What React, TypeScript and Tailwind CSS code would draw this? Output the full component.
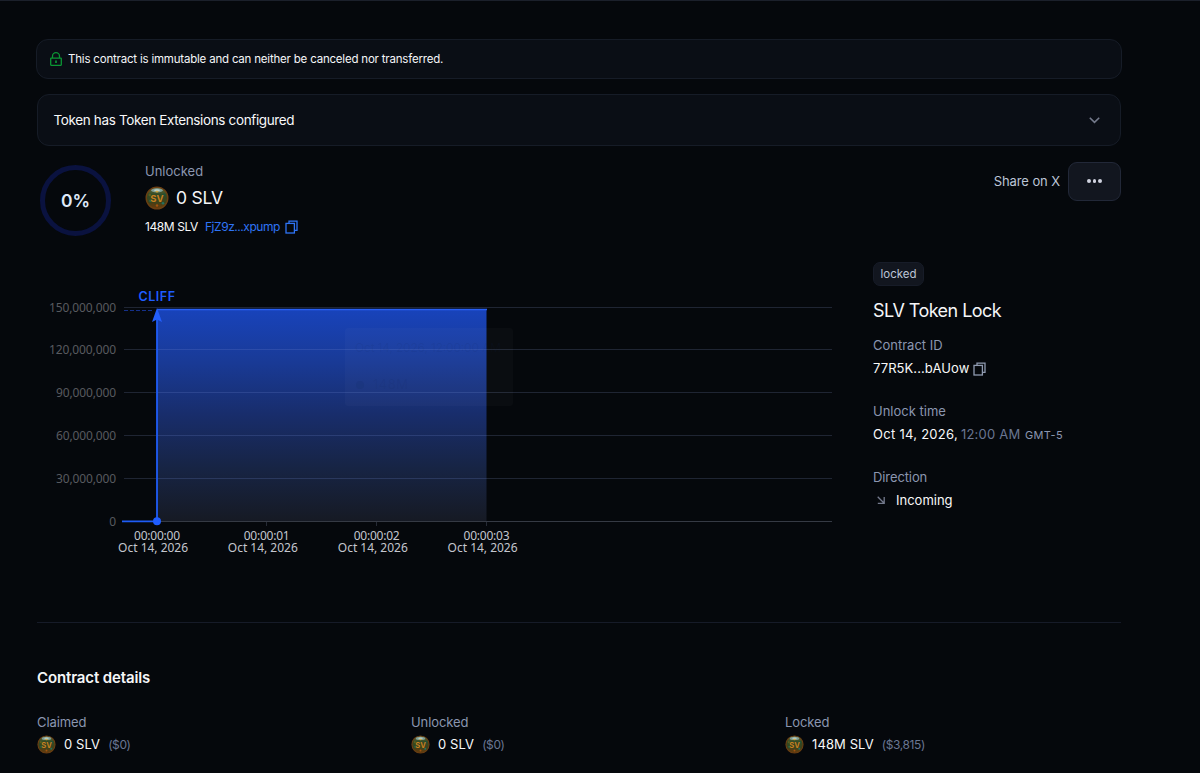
import React from "react";

function CopyIcon({ className }: { className: string }) {
  return (
    <svg className={className} viewBox="0 0 13 14" fill="none" stroke="currentColor" strokeWidth="1.3">
      <path d="M4 3.4V1.2H12V10.4H9.6" />
      <rect x="1" y="3.4" width="8.4" height="9.6" />
    </svg>
  );
}

function Coin({ className, id }: { className: string; id: string }) {
  return (
    <svg className={className} viewBox="0 0 24 24">
      <defs>
        <linearGradient id={id} x1="0" y1="0" x2="0" y2="1">
          <stop offset="0" stopColor="#6d6a35" />
          <stop offset="0.35" stopColor="#2f4a26" />
          <stop offset="0.7" stopColor="#3d421a" />
          <stop offset="1" stopColor="#6b3a0c" />
        </linearGradient>
      </defs>
      <circle cx="12" cy="12" r="10.8" fill={`url(#${id})`} stroke="#6b3f12" strokeWidth="1.4" />
      <ellipse cx="12" cy="4.3" rx="6" ry="2" fill="#7f9f96" />
      <ellipse cx="12" cy="4.2" rx="3" ry="0.9" fill="#bcd0c8" />
      <ellipse cx="12" cy="5.6" rx="1.6" ry="0.9" fill="#d0a840" />
      <circle cx="5.5" cy="14.8" r="1.3" fill="#20645a" />
      <circle cx="18" cy="17.3" r="1.3" fill="#23705f" />
      <circle cx="8" cy="18.5" r="1.3" fill="#5a3a10" />
      <circle cx="12" cy="19.5" r="1.2" fill="#a3520f" />
      <circle cx="4.8" cy="9" r="1.3" fill="#5a5b1e" />
      <circle cx="19" cy="9" r="1.5" fill="#1f5136" />
      <text x="12" y="16" textAnchor="middle" fontSize="9.5" fontWeight="700" fill="#c67f20" fontFamily="Inter, sans-serif">
        SV
      </text>
    </svg>
  );
}

const gridLines = [
  { y: 307.5, label: "150,000,000", w: 67 },
  { y: 349.5, label: "120,000,000", w: 67 },
  { y: 392.5, label: "90,000,000", w: 60 },
  { y: 435.5, label: "60,000,000", w: 60 },
  { y: 478.5, label: "30,000,000", w: 60 },
  { y: 521.5, label: "0", w: 6 },
];
const ticks = [
  { x: 157, label: "00:00:00" },
  { x: 266.7, label: "00:00:01" },
  { x: 376.7, label: "00:00:02" },
  { x: 486.5, label: "00:00:03" },
];

function Chart() {
  return (
    <svg className="block h-[290px] w-[800px] font-['Noto_Sans',sans-serif]" viewBox="37 280 800 290">
      <defs>
        <linearGradient id="area" x1="0" y1="0" x2="0" y2="1">
          <stop offset="0" stopColor="#1843bb" />
          <stop offset="0.25" stopColor="#193a96" />
          <stop offset="0.5" stopColor="#182d6b" />
          <stop offset="0.75" stopColor="#172444" />
          <stop offset="1" stopColor="#161a24" />
        </linearGradient>
      </defs>
      <path d="M124 307.5H832" stroke="#1f2533" />
      <rect x="157" y="309" width="329.5" height="212" fill="url(#area)" />
      {gridLines.map((g) => (
        <g key={g.label}>
          {g.y > 308 && g.y < 520 && (
            <>
              <path d={`M124 ${g.y}H156M487 ${g.y}H832`} stroke="#1f2533" />
              <path d={`M157 ${g.y}H487`} stroke="#7088d0" strokeOpacity="0.22" />
            </>
          )}
          <text x="116" y={g.y + 4.2} textAnchor="end" fontSize="12" textLength={g.w} fill="#585a5f">
            {g.label}
          </text>
        </g>
      ))}
      <path d="M124 521.5H832" stroke="#353a44" />
      <path d="M266.5 522V526M376.5 522V526M486.5 522V526" stroke="#252a35" />
      <rect x="345" y="328" width="168" height="78" rx="3" fill="#ffffff" fillOpacity="0.022" />
      <circle cx="360" cy="385" r="4" fill="#183175" fillOpacity="0.3" />
      <g fill="#10245e" fillOpacity="0.1" fontFamily="Inter, sans-serif">
        <text x="355" y="352" fontSize="12" textLength="146">Oct 14, 2026, 12:00:00 AM</text>
        <text x="373" y="389" fontSize="13" textLength="35">148M</text>
      </g>
      <path d="M124 310.5H154" stroke="#15308a" strokeDasharray="4 2" />
      <path d="M157 309.5H487" stroke="#285ff5" strokeWidth="1.6" />
      <path d="M122 521.3H157V312" fill="none" stroke="#1f5cf5" strokeWidth="1.8" />
      <path d="M157 308L162 322L157 319.5L152 322Z" fill="#235efa" />
      <circle cx="157" cy="521.3" r="4" fill="#1f5dff" />
      <text x="138.5" y="300.8" fontSize="12.5" fontWeight="600" textLength="36.5" fill="#1f5dff" fontFamily="Inter, sans-serif">
        CLIFF
      </text>
      {ticks.map((t) => (
        <g key={t.label} fill="#c3c6ce" fontSize="12" textAnchor="middle">
          <text x={t.x} y="540" textLength="46">{t.label}</text>
          <text x={t.x - 3.9} y="551.7" textLength="70">Oct 14, 2026</text>
        </g>
      ))}
    </svg>
  );
}

function Stat({ title, amount, usd, id }: { title: string; amount: string; usd: string; id: string }) {
  return (
    <div className="w-[374px]">
      <div className="h-[18px] text-[13px] leading-[18px] tracking-[-0.1px] text-[#8b96b0]">{title}</div>
      <div className="mt-[4px] flex h-[19px] items-center">
        <Coin className="size-[19px]" id={id} />
        <span className="ml-2 text-[13px] tracking-[0.1px] text-[#f8f8f9]">{amount}</span>
        <span className="ml-2 text-[12px] tracking-[-0.4px] text-[#6a7692]">{usd}</span>
      </div>
    </div>
  );
}

export default function App() {
  return (
    <div className="flex h-[773px] w-[1200px] flex-col overflow-hidden whitespace-nowrap border-t border-[#1b202b] bg-[#05080c] font-['Inter',sans-serif]">
      <div className="ml-[36px] mt-[38px] flex h-[40px] w-[1086px] shrink-0 items-center rounded-[12px] border border-[#161c27] bg-[#0a0e15] pl-[13px]">
        <svg className="h-[14px] w-[12px]" viewBox="0 0 12 14" fill="none" stroke="#0b9634" strokeWidth="1.3">
          <rect x="0.7" y="6.1" width="10.6" height="7.2" rx="0.5" />
          <path d="M2.5 6V4.2A3.5 3.5 0 0 1 9.5 4.2V6" />
          <path d="M6 8.6V11" strokeWidth="1.7" />
        </svg>
        <span className="ml-[6px] pt-[2px] text-[11.5px] tracking-[-0.2px] text-[#f5f6f8]">This contract is immutable and can neither be canceled nor transferred.</span>
      </div>
      <div className="ml-[37px] mt-[15px] flex h-[52px] w-[1084px] shrink-0 items-center justify-between rounded-[12px] border border-[#161c27] bg-[#0a0e15] pl-[15.5px] pr-[20px]">
        <span className="text-[13.5px] tracking-[-0.36px] text-[#f8f8f9]">Token has Token Extensions configured</span>
        <svg className="h-[7px] w-[11px]" viewBox="0 0 11 7" fill="none" stroke="#747a8b" strokeWidth="1.6">
          <path d="M0.8 0.8L5.5 5.4L10.2 0.8" />
        </svg>
      </div>

      <div className="ml-[37px] mt-[15px] flex h-[119px] w-[1084px] shrink-0 justify-between">
        <div className="flex">
          <div className="ml-[3px] mt-[4px] flex size-[71px] items-center justify-center rounded-full border-[5px] border-[#0a123f] pt-[2px] text-[17.5px] font-semibold text-[#dfe9f8]">
            0%
          </div>
          <div className="ml-[34px] flex flex-col">
            <div className="mt-[1px] h-[18px] text-[13px] leading-[18px] text-[#8b96b0]">Unlocked</div>
            <div className="mt-[6px] flex h-[24px] items-center">
              <Coin className="size-[24px]" id="coin-main" />
              <span className="ml-[7px] text-[17.5px] tracking-[-0.2px] text-[#f5f6f8]">0 SLV</span>
            </div>
            <div className="mt-[8px] flex h-[18px] items-center text-[12px]">
              <span className="w-[53px] tracking-[-0.42px] text-[#f8f8f9]">148M SLV</span>
              <span className="ml-[7px] w-[75px] tracking-[-0.46px] text-[#2f74f5]">FjZ9z...xpump</span>
              <CopyIcon className="ml-[5px] h-[14px] w-[13px] text-[#2f74f5]" />
            </div>
          </div>
        </div>
        <div className="flex h-[40px] items-center">
          <span className="pt-px text-[13px] tracking-[-0.1px] text-[#bcc5d6]">Share on X</span>
          <button className="ml-2 flex h-[39px] w-[53px] items-center justify-center gap-[2px] rounded-[9px] border border-[#222838] bg-[#12161f]">
            <i className="size-[3.5px] rounded-full bg-[#d0d2df]" />
            <i className="size-[3.5px] rounded-full bg-[#d0d2df]" />
            <i className="size-[3.5px] rounded-full bg-[#d0d2df]" />
          </button>
        </div>
      </div>

      <div className="ml-[37px] flex h-[343px] w-[1084px] shrink-0 border-b border-[#161b28]">
        <Chart />
        <div className="ml-[36px] flex flex-col items-start">
          <div className="-mt-[18px] flex h-[24px] w-[51px] items-center justify-center rounded-[7px] border border-[#171c28] bg-[#12161f] pt-px text-[11.5px] text-[#bcc5d6]">
            locked
          </div>
          <div className="mt-[13px] h-[24px] text-[18px] leading-[24px] tracking-[-0.55px] text-[#f5f6f8]">SLV Token Lock</div>
          <div className="mt-[13px] h-[18px] text-[13px] leading-[18px] text-[#8b96b0]">Contract ID</div>
          <div className="mt-[6px] flex h-[18px] items-center text-[13px] text-[#f8f8f9]">
            <span className="tracking-[0.08px]">77R5K...bAUow</span>
            <CopyIcon className="ml-1 h-[14px] w-[13px] text-[#8f9ab0]" />
          </div>
          <div className="mt-[24px] h-[18px] text-[13px] leading-[18px] text-[#8b96b0]">Unlock time</div>
          <div className="mt-[5px] flex h-[18px] items-baseline text-[13px] leading-[18px]">
            <span className="w-[85px] tracking-[0.28px] text-[#f8f8f9]">Oct 14, 2026,</span>
            <span className="ml-[3px] w-[60px] tracking-[0.2px] text-[#6a7692]">12:00 AM</span>
            <span className="ml-1 text-[11px] tracking-[0.35px] text-[#8b96b0]">GMT-5</span>
          </div>
          <div className="mt-[25px] h-[18px] text-[13px] leading-[18px] tracking-[-0.1px] text-[#8b96b0]">Direction</div>
          <div className="mt-[5px] flex h-[18px] items-center text-[13px] text-[#f8f8f9]">
            <svg className="ml-1 size-[8px]" viewBox="0 0 8 8" fill="none" stroke="#747a8d" strokeWidth="1.3">
              <path d="M0.7 0.7L7.2 7.2M7.2 0.9V7.3H0.8" />
            </svg>
            <span className="ml-[11px] pt-[2px]">Incoming</span>
          </div>
        </div>
      </div>

      <div className="ml-[37px] mt-[43px] h-[24px] text-[15px] font-semibold leading-[24px] tracking-[-0.13px] text-[#f5f6f8]">Contract details</div>
      <div className="ml-[37px] mt-[23px] flex">
        <Stat title="Claimed" amount="0 SLV" usd="($0)" id="coin-claimed" />
        <Stat title="Unlocked" amount="0 SLV" usd="($0)" id="coin-unlocked" />
        <Stat title="Locked" amount="148M SLV" usd="($3,815)" id="coin-locked" />
      </div>
    </div>
  );
}
